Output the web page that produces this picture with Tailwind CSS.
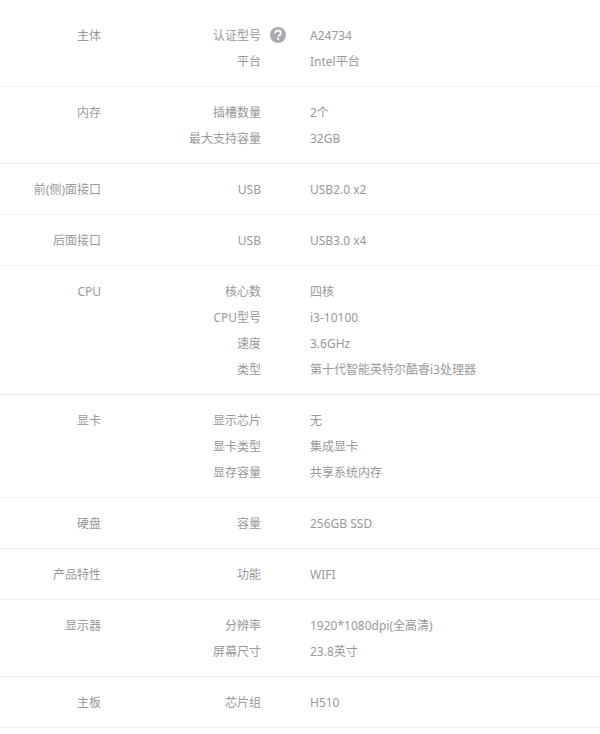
<!DOCTYPE html>
<html lang="zh-CN">
<head>
    <meta charset="UTF-8">
    <title>产品参数</title>
    <script src="https://cdn.jsdelivr.net/npm/@tailwindcss/browser@4"></script>
</head>
<body class="bg-white text-[12px] leading-[26px] text-[#999] font-['Noto_Sans','Noto_Sans_CJK_SC',sans-serif] overflow-hidden">
    <div class="pt-[10px]">
        <!-- 主体 -->
        <div class="flex pt-[13px] pb-[11px] border-b border-[#eee]">
            <div class="w-[101px] text-right">主体</div>
            <div class="flex-1">
                <div class="flex">
                    <div class="w-[160px] text-right">认证型号</div>
                    <div class="relative w-[49px]">
                        <svg class="absolute left-[9px] top-[4px] w-4 h-4" viewBox="0 0 16 16"><circle cx="8" cy="8" r="8" fill="#aaaab2"/><path d="M5.2 6.2C5.3 4.6 6.5 3.7 8 3.7c1.6 0 2.8 1 2.8 2.4 0 1.1-.6 1.7-1.5 2.3-.7.4-.9.8-.9 1.4" fill="none" stroke="#fff" stroke-width="1.7"/><rect x="7.1" y="10.8" width="1.9" height="1.9" fill="#fff"/></svg>
                    </div>
                    <div>A24734</div>
                </div>
                <div class="flex">
                    <div class="w-[160px] text-right mr-[49px]">平台</div>
                    <div>Intel平台</div>
                </div>
            </div>
        </div>
        <!-- 内存 -->
        <div class="flex pt-[13px] pb-[11px] border-b border-[#eee]">
            <div class="w-[101px] text-right">内存</div>
            <div class="flex-1">
                <div class="flex"><div class="w-[160px] text-right mr-[49px]">插槽数量</div><div>2个</div></div>
                <div class="flex"><div class="w-[160px] text-right mr-[49px]">最大支持容量</div><div>32GB</div></div>
            </div>
        </div>
        <!-- 前(侧)面接口 -->
        <div class="flex pt-[13px] pb-[11px] border-b border-[#eee]">
            <div class="w-[101px] text-right">前(侧)面接口</div>
            <div class="flex-1">
                <div class="flex"><div class="w-[160px] text-right mr-[49px]">USB</div><div>USB2.0 x2</div></div>
            </div>
        </div>
        <!-- 后面接口 -->
        <div class="flex pt-[13px] pb-[11px] border-b border-[#eee]">
            <div class="w-[101px] text-right">后面接口</div>
            <div class="flex-1">
                <div class="flex"><div class="w-[160px] text-right mr-[49px]">USB</div><div>USB3.0 x4</div></div>
            </div>
        </div>
        <!-- CPU -->
        <div class="flex pt-[13px] pb-[11px] border-b border-[#eee]">
            <div class="w-[101px] text-right">CPU</div>
            <div class="flex-1">
                <div class="flex"><div class="w-[160px] text-right mr-[49px]">核心数</div><div>四核</div></div>
                <div class="flex"><div class="w-[160px] text-right mr-[49px]">CPU型号</div><div>i3-10100</div></div>
                <div class="flex"><div class="w-[160px] text-right mr-[49px]">速度</div><div>3.6GHz</div></div>
                <div class="flex"><div class="w-[160px] text-right mr-[49px]">类型</div><div>第十代智能英特尔酷睿i3处理器</div></div>
            </div>
        </div>
        <!-- 显卡 -->
        <div class="flex pt-[13px] pb-[11px] border-b border-[#eee]">
            <div class="w-[101px] text-right">显卡</div>
            <div class="flex-1">
                <div class="flex"><div class="w-[160px] text-right mr-[49px]">显示芯片</div><div>无</div></div>
                <div class="flex"><div class="w-[160px] text-right mr-[49px]">显卡类型</div><div>集成显卡</div></div>
                <div class="flex"><div class="w-[160px] text-right mr-[49px]">显存容量</div><div>共享系统内存</div></div>
            </div>
        </div>
        <!-- 硬盘 -->
        <div class="flex pt-[13px] pb-[11px] border-b border-[#eee]">
            <div class="w-[101px] text-right">硬盘</div>
            <div class="flex-1">
                <div class="flex"><div class="w-[160px] text-right mr-[49px]">容量</div><div>256GB SSD</div></div>
            </div>
        </div>
        <!-- 产品特性 -->
        <div class="flex pt-[13px] pb-[11px] border-b border-[#eee]">
            <div class="w-[101px] text-right">产品特性</div>
            <div class="flex-1">
                <div class="flex"><div class="w-[160px] text-right mr-[49px]">功能</div><div>WIFI</div></div>
            </div>
        </div>
        <!-- 显示器 -->
        <div class="flex pt-[13px] pb-[11px] border-b border-[#eee]">
            <div class="w-[101px] text-right">显示器</div>
            <div class="flex-1">
                <div class="flex"><div class="w-[160px] text-right mr-[49px]">分辨率</div><div>1920*1080dpi(全高清)</div></div>
                <div class="flex"><div class="w-[160px] text-right mr-[49px]">屏幕尺寸</div><div>23.8英寸</div></div>
            </div>
        </div>
        <!-- 主板 -->
        <div class="flex pt-[13px] pb-[11px] border-b border-[#eee]">
            <div class="w-[101px] text-right">主板</div>
            <div class="flex-1">
                <div class="flex"><div class="w-[160px] text-right mr-[49px]">芯片组</div><div>H510</div></div>
            </div>
        </div>
    </div>
</body>
</html>
